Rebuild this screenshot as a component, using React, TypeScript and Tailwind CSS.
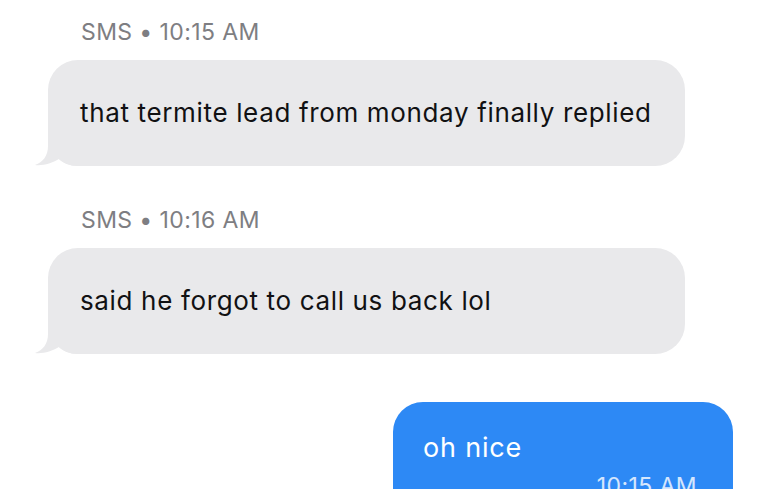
const FONT = "font-['Inter','Liberation_Sans',sans-serif]"

function Tail() {
  return (
    <svg
      className="absolute left-[-14px] bottom-0 w-[44px] h-[30px]"
      viewBox="0 0 44 30"
      fill="#e9e9eb"
    >
      <path d="M14 0 L14 10 C14 20 9 26 1 29 C9 30 18 27 25 23 C29 27 35 30 44 30 L44 0 Z" />
    </svg>
  )
}

function Incoming({ label, text, className }: { label: string; text: string; className?: string }) {
  return (
    <div className={className}>
      <p className="pl-[81px] text-[23px] leading-[28px] tracking-[0.4px] text-[#7e7e82]">{label}</p>
      <div className="relative ml-[48px] mt-[14px] w-[637px] h-[106px] rounded-[30px] bg-[#e9e9eb] flex items-center pl-[32px]">
        <Tail />
        <span className="relative text-[26px] leading-[34px] tracking-[0.65px] text-[#111113]">{text}</span>
      </div>
    </div>
  )
}

export default function App() {
  return (
    <div className={`h-[489px] w-[784px] overflow-hidden bg-white pt-[18px] ${FONT}`}>
      <Incoming label="SMS • 10:15 AM" text="that termite lead from monday finally replied" />
      <Incoming className="mt-[40px]" label="SMS • 10:16 AM" text="said he forgot to call us back lol" />
      <div className="ml-[393px] mt-[48px] w-[340px] h-[140px] rounded-[30px] bg-[#2d89f5] pt-[29px] pl-[30px] pr-[36px]">
        <p className="text-[27px] leading-[34px] tracking-[0.8px] text-white">oh nice</p>
        <p className="mt-[7px] text-right text-[23px] leading-[28px] tracking-[0.4px] text-white/80">10:15 AM</p>
      </div>
    </div>
  )
}
